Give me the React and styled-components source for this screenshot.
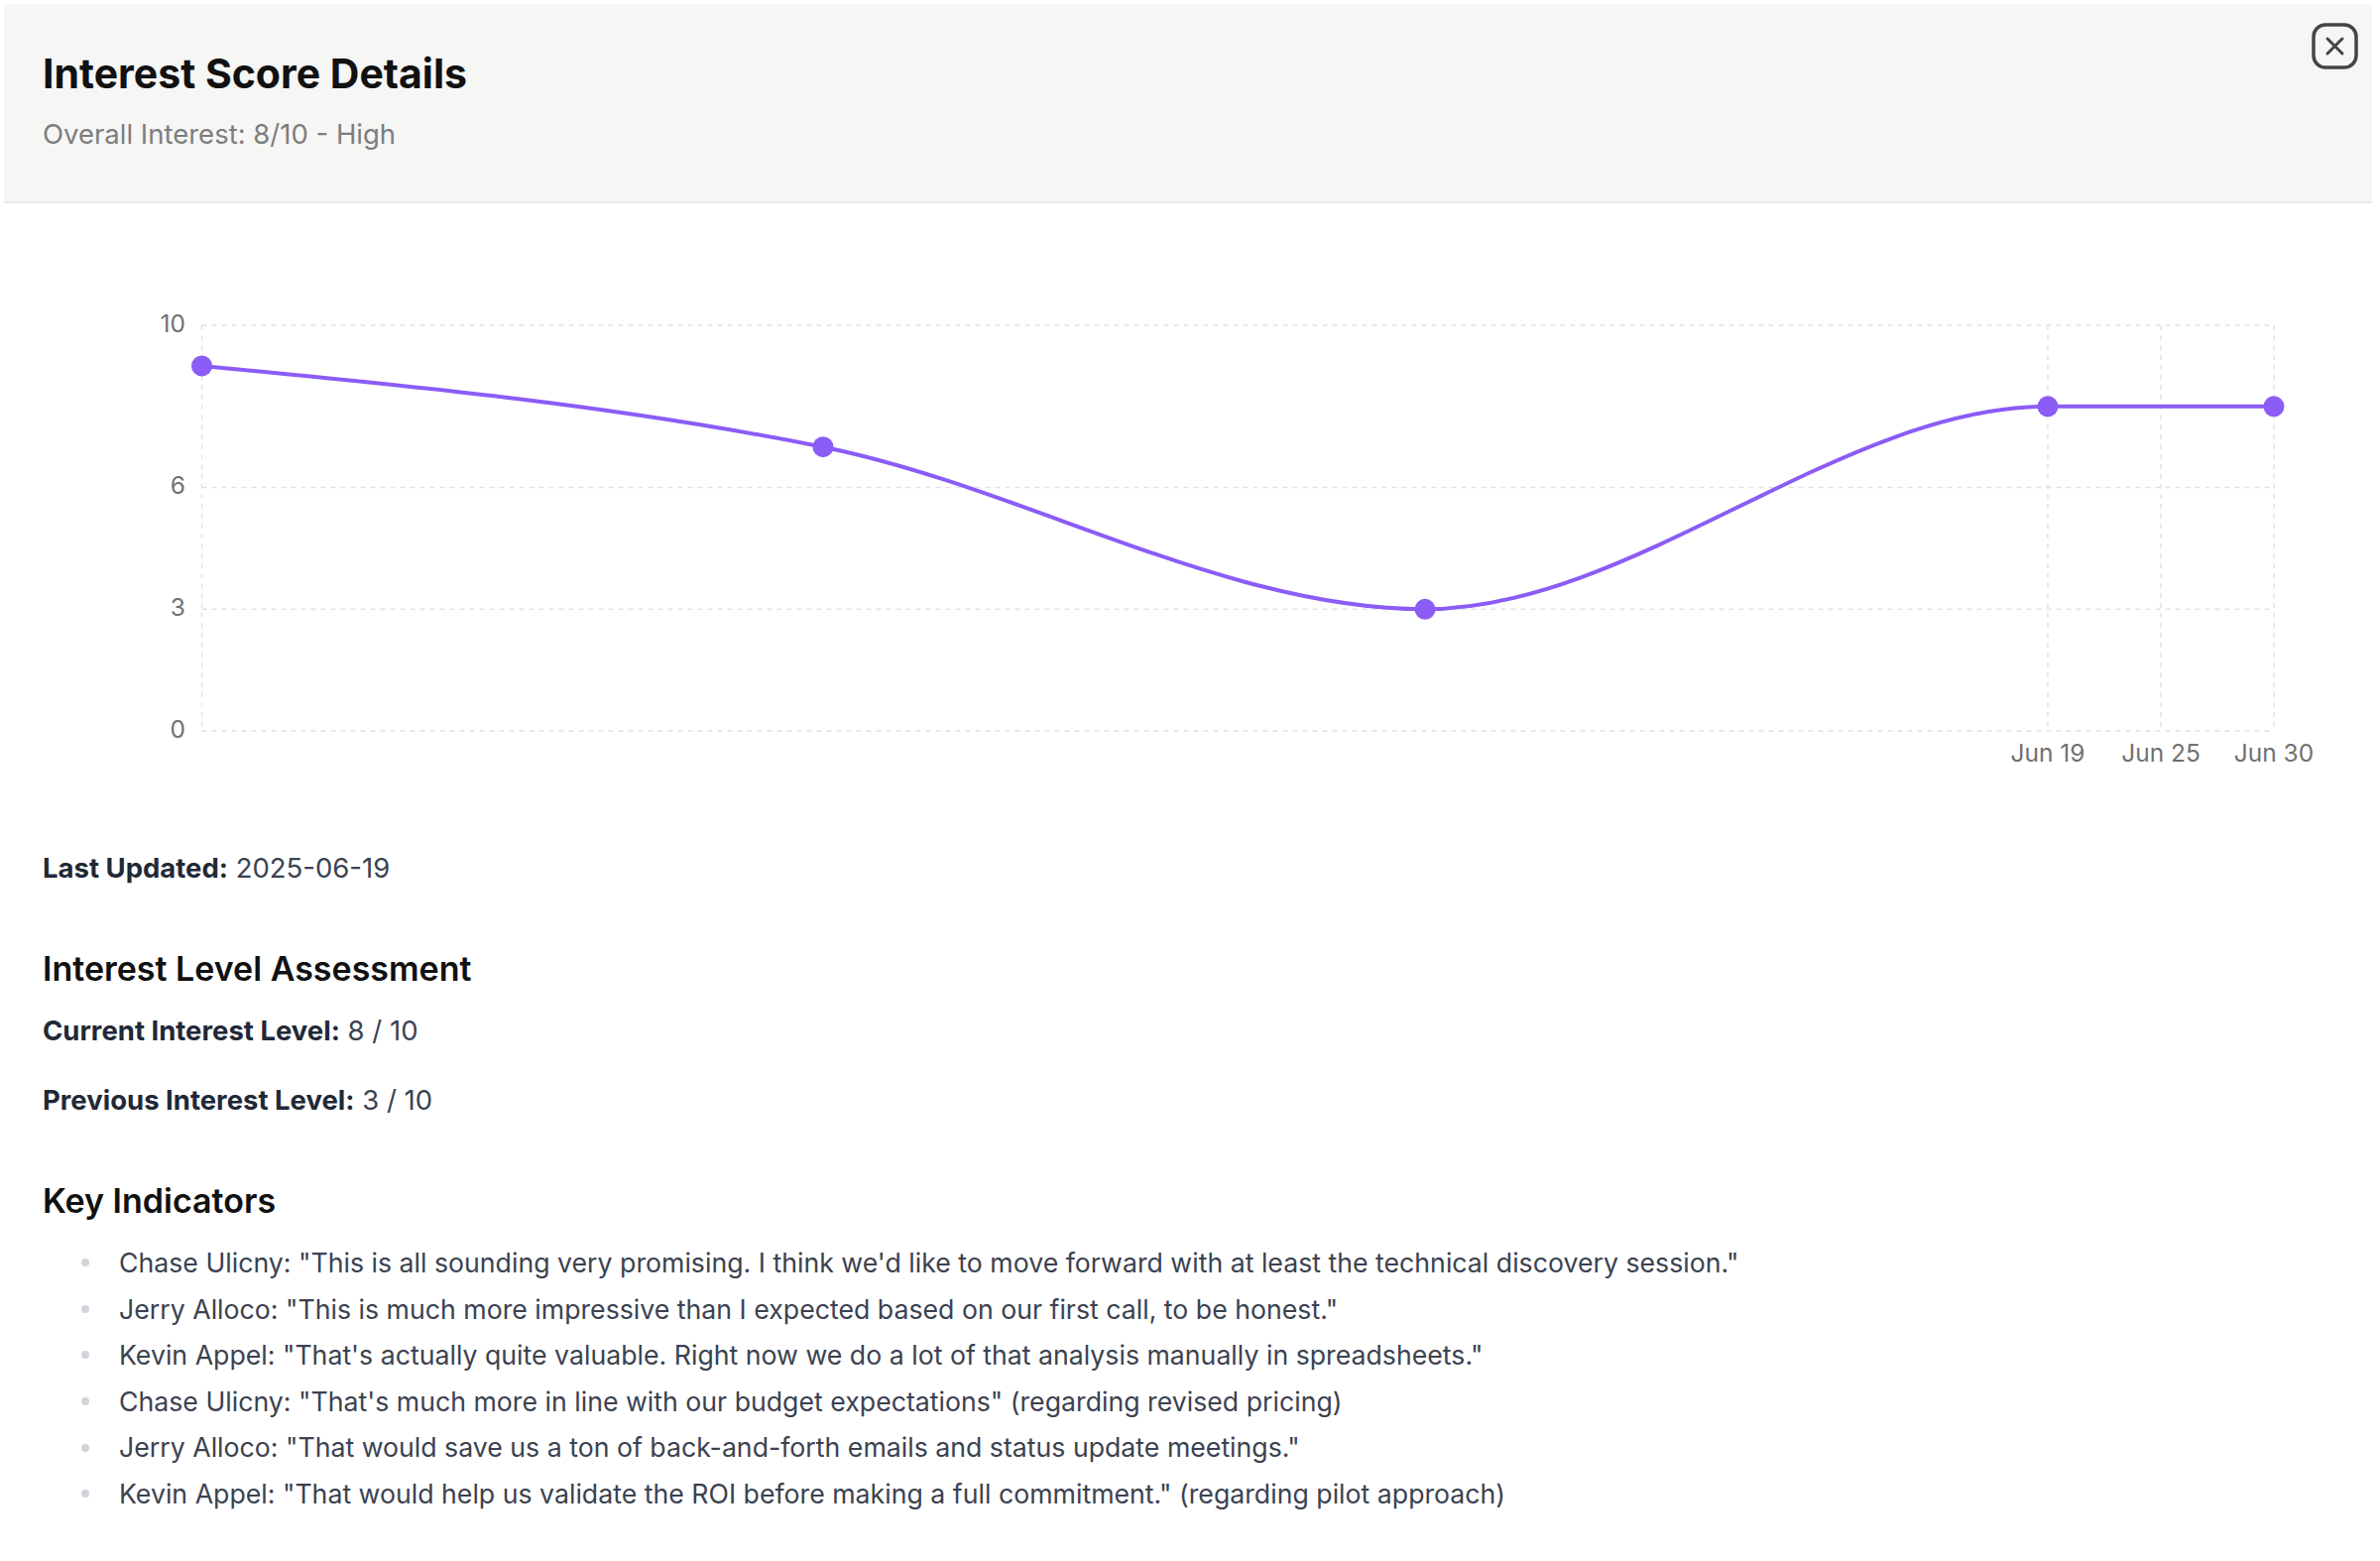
import React from "react";
import styled, { createGlobalStyle } from "styled-components";

const GlobalStyle = createGlobalStyle`
  html, body {
    margin: 0;
    padding: 0;
    background: #ffffff;
  }
  body {
    font-family: Inter, "Liberation Sans", sans-serif;
    color: #111827;
  }
`;

// chart geometry (svg pixels)
const PLOT = { left: 199.5, right: 2289, top: 123, bottom: 532 };
const unit = (PLOT.bottom - PLOT.top) / 10;
const yFor = (v) => PLOT.bottom - v * unit;

const scores = [
  { x: 199.5, value: 9 },
  { x: 826, value: 7 },
  { x: 1433, value: 3 },
  { x: 2061, value: 8, label: "Jun 19" },
  { x: 2175, value: 8, label: "Jun 25", hidden: true },
  { x: 2289, value: 8, label: "Jun 30" },
];

const yTicks = [0, 3, 6, 10];
const gridX = [PLOT.left, 2061, 2175, 2289];

const indicators = [
  'Chase Ulicny: "This is all sounding very promising. I think we\'d like to move forward with at least the technical discovery session."',
  'Jerry Alloco: "This is much more impressive than I expected based on our first call, to be honest."',
  'Kevin Appel: "That\'s actually quite valuable. Right now we do a lot of that analysis manually in spreadsheets."',
  'Chase Ulicny: "That\'s much more in line with our budget expectations" (regarding revised pricing)',
  'Jerry Alloco: "That would save us a ton of back-and-forth emails and status update meetings."',
  'Kevin Appel: "That would help us validate the ROI before making a full commitment." (regarding pilot approach)',
];

// monotone-x curve, same as recharts "monotone"
const monotonePath = (pts) => {
  const n = pts.length;
  const sign = (v) => (v < 0 ? -1 : 1);
  const t = new Array(n).fill(0);
  for (let i = 1; i < n - 1; i++) {
    const h0 = pts[i].x - pts[i - 1].x;
    const h1 = pts[i + 1].x - pts[i].x;
    const s0 = (pts[i].y - pts[i - 1].y) / h0;
    const s1 = (pts[i + 1].y - pts[i].y) / h1;
    const p = (s0 * h1 + s1 * h0) / (h0 + h1);
    t[i] = (sign(s0) + sign(s1)) * Math.min(Math.abs(s0), Math.abs(s1), 0.5 * Math.abs(p)) || 0;
  }
  const h = pts[1].x - pts[0].x;
  t[0] = (3 * (pts[1].y - pts[0].y) / h - t[1]) / 2;
  const hl = pts[n - 1].x - pts[n - 2].x;
  t[n - 1] = (3 * (pts[n - 1].y - pts[n - 2].y) / hl - t[n - 2]) / 2;
  let d = `M${pts[0].x},${pts[0].y}`;
  for (let i = 1; i < n; i++) {
    const a = pts[i - 1];
    const b = pts[i];
    const dx = (b.x - a.x) / 3;
    d += ` C${a.x + dx},${a.y + dx * t[i - 1]} ${b.x - dx},${b.y - dx * t[i]} ${b.x},${b.y}`;
  }
  return d;
};

const CloseIcon = () => (
  <svg width="47" height="47" viewBox="0 0 47 47" fill="none">
    <rect x="2" y="2" width="43" height="43" rx="12" stroke="#454545" strokeWidth="3.5" />
    <path d="M16 16 L31 31 M31 16 L16 31" stroke="#454545" strokeWidth="3" strokeLinecap="round" />
  </svg>
);

const ScoreChart = () => {
  const linePts = scores.filter((s) => !s.hidden).map((s) => ({ x: s.x, y: yFor(s.value) }));
  return (
    <ChartSvg width="2388" height="580" viewBox="0 0 2388 580">
      {yTicks.map((v) => (
        <line key={`h${v}`} x1={PLOT.left} x2={PLOT.right} y1={yFor(v)} y2={yFor(v)} stroke="#e2e2e2" strokeWidth="1.5" strokeDasharray="5 5" />
      ))}
      {gridX.map((x) => (
        <line key={`v${x}`} x1={x} x2={x} y1={PLOT.top} y2={PLOT.bottom} stroke="#e2e2e2" strokeWidth="1.5" strokeDasharray="5 5" />
      ))}
      {yTicks.map((v) => (
        <AxisText key={`t${v}`} x="183" y={yFor(v)} textAnchor="end" dominantBaseline="middle">
          {v}
        </AxisText>
      ))}
      {scores.filter((s) => s.label).map((s) => (
        <AxisText key={s.label} x={s.x} y="556" textAnchor="middle" dominantBaseline="middle">
          {s.label}
        </AxisText>
      ))}
      <path d={monotonePath(linePts)} fill="none" stroke="#8b5cf6" strokeWidth="4" />
      {linePts.map((p) => (
        <circle key={p.x} cx={p.x} cy={p.y} r="10.5" fill="#8b5cf6" />
      ))}
    </ChartSvg>
  );
};

export default function App() {
  return (
    <Page>
      <GlobalStyle />
      <Header>
        <Title>Interest Score Details</Title>
        <Subtitle>Overall Interest: 8/10 - High</Subtitle>
        <CloseButton aria-label="Close">
          <CloseIcon />
        </CloseButton>
      </Header>

      <ScoreChart />

      <Content>
        <InfoLine>
          <strong>Last Updated:</strong> 2025-06-19
        </InfoLine>

        <SectionTitle>Interest Level Assessment</SectionTitle>
        <InfoLine $gap={27}>
          <strong>Current Interest Level:</strong> 8 / 10
        </InfoLine>
        <InfoLine $gap={38}>
          <strong>Previous Interest Level:</strong> 3 / 10
        </InfoLine>

        <SectionTitle>Key Indicators</SectionTitle>
        <IndicatorList>
          {indicators.map((text) => (
            <Indicator key={text}>
              <Dot />
              <span>{text}</span>
            </Indicator>
          ))}
        </IndicatorList>
      </Content>
    </Page>
  );
}

const Page = styled.div`
  padding: 4px 8px 40px 4px;
`;

const Header = styled.header`
  position: relative;
  height: 201px;
  padding: 46px 0 0 39px;
  box-sizing: border-box;
  background: #f6f6f5;
  border-bottom: 2px solid #ebebea;
`;

const Title = styled.h1`
  margin: 0;
  font-size: 41px;
  line-height: 48px;
  font-weight: 700;
  color: #111111;
`;

const Subtitle = styled.p`
  margin: 20px 0 0;
  font-size: 27.5px;
  line-height: 34px;
  color: #7d7d7d;
`;

const CloseButton = styled.button`
  position: absolute;
  top: 19px;
  right: 14px;
  padding: 0;
  border: none;
  background: none;
  display: flex;
  cursor: pointer;
`;

const ChartSvg = styled.svg`
  display: block;
`;

const AxisText = styled.text`
  font-family: Inter, "Liberation Sans", sans-serif;
  font-size: 24.5px;
  fill: #707070;
`;

const Content = styled.section`
  padding: 74px 0 0 39px;
`;

const InfoLine = styled.p`
  margin: ${(p) => (p.$gap ? `${p.$gap}px` : 0)} 0 0;
  font-size: 27.5px;
  line-height: 32px;
  color: #3b4250;

  strong {
    font-weight: 700;
    color: #1f2937;
  }
`;

const SectionTitle = styled.h3`
  margin: 67px 0 0;
  font-size: 34px;
  line-height: 38px;
  font-weight: 600;
  color: #111111;
`;

const IndicatorList = styled.ul`
  list-style: none;
  margin: 20px 0 0;
  padding: 0;
`;

const Indicator = styled.li`
  display: flex;
  align-items: center;
  font-size: 26.7px;
  line-height: 46.6px;
  color: #3b4250;
`;

const Dot = styled.span`
  flex: none;
  width: 8px;
  height: 8px;
  margin: 0 30px 0 39px;
  border-radius: 50%;
  background: #d1d5db;
`;
